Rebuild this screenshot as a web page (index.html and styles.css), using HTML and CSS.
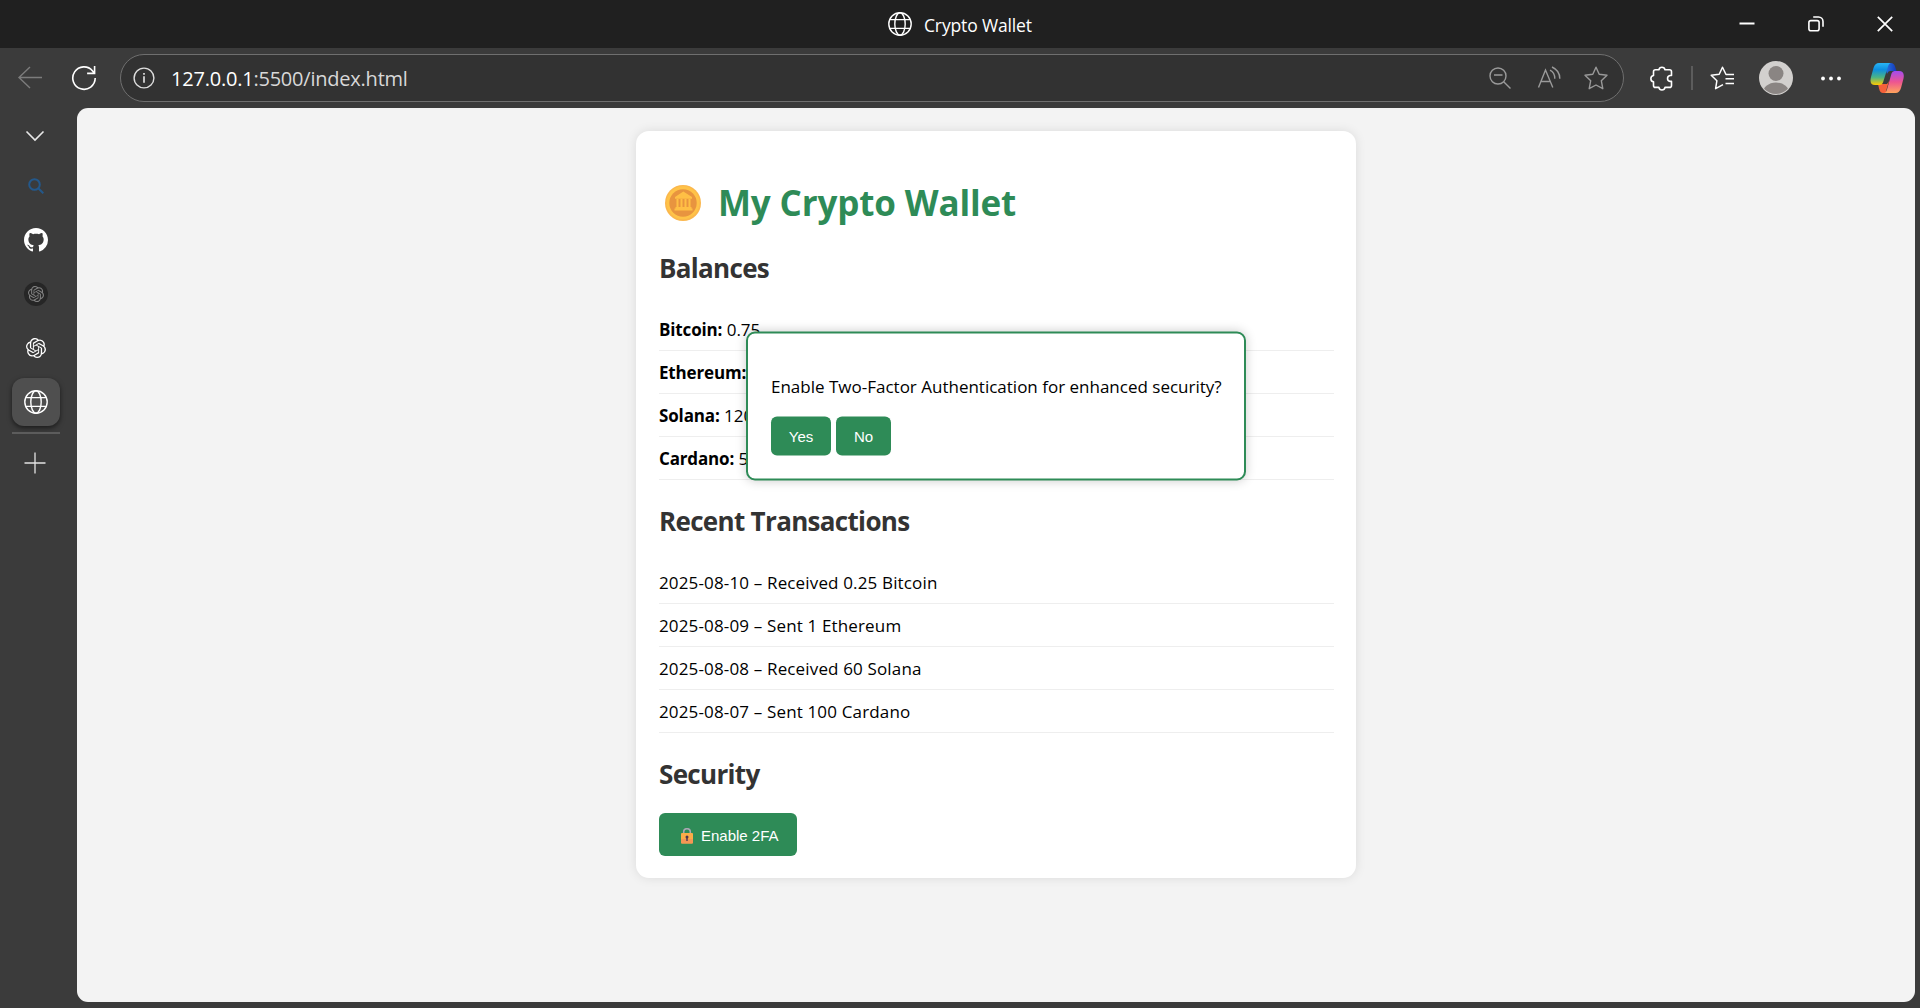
FILE: index.html
```html
<!DOCTYPE html>
<html lang="en">
<head>
<meta charset="utf-8">
<title>Crypto Wallet</title>
<link rel="stylesheet" href="styles.css">
</head>
<body>
<svg class="defs" aria-hidden="true">
  <symbol id="globe" viewBox="0 0 24 24"><g fill="none" stroke="currentColor" stroke-width="1.4"><circle cx="12" cy="12" r="11.2"/><ellipse cx="12" cy="12" rx="5.2" ry="11.2"/><path d="M1.8 7.6h20.4M1.8 16.4h20.4"/></g></symbol>
  <symbol id="knot" viewBox="0 0 24 24"><path fill="currentColor" d="M22.2819 9.8211a5.9847 5.9847 0 0 0-.5157-4.9108 6.0462 6.0462 0 0 0-6.5098-2.9A6.0651 6.0651 0 0 0 4.9807 4.1818a5.9847 5.9847 0 0 0-3.9977 2.9 6.0462 6.0462 0 0 0 .7427 7.0966 5.98 5.98 0 0 0 .511 4.9107 6.051 6.051 0 0 0 6.5146 2.9001A5.9847 5.9847 0 0 0 13.2599 24a6.0557 6.0557 0 0 0 5.7718-4.2058 5.9894 5.9894 0 0 0 3.9977-2.9001 6.0557 6.0557 0 0 0-.7475-7.0729zm-9.022 12.6081a4.4755 4.4755 0 0 1-2.8764-1.0408l.1419-.0804 4.7783-2.7582a.7948.7948 0 0 0 .3927-.6813v-6.7369l2.02 1.1686a.071.071 0 0 1 .038.052v5.5826a4.504 4.504 0 0 1-4.4945 4.4944zm-9.6607-4.1254a4.4708 4.4708 0 0 1-.5346-3.0137l.142.0852 4.783 2.7582a.7712.7712 0 0 0 .7806 0l5.8428-3.3685v2.3324a.0804.0804 0 0 1-.0332.0615L9.74 19.9502a4.4992 4.4992 0 0 1-6.1408-1.6464zM2.3408 7.8956a4.485 4.485 0 0 1 2.3655-1.9728V11.6a.7664.7664 0 0 0 .3879.6765l5.8144 3.3543-2.0201 1.1685a.0757.0757 0 0 1-.071 0l-4.8303-2.7865A4.504 4.504 0 0 1 2.3408 7.872zm16.5963 3.8558L13.1038 8.364 15.1192 7.2a.0757.0757 0 0 1 .071 0l4.8303 2.7913a4.4944 4.4944 0 0 1-.6765 8.1042v-5.6772a.79.79 0 0 0-.407-.667zm2.0107-3.0231l-.142-.0852-4.7735-2.7818a.7759.7759 0 0 0-.7854 0L9.409 9.2297V6.8974a.0662.0662 0 0 1 .0284-.0615l4.8303-2.7866a4.4992 4.4992 0 0 1 6.6802 4.66zM8.3065 12.863l-2.02-1.1638a.0804.0804 0 0 1-.038-.0567V6.0742a4.4992 4.4992 0 0 1 7.3757-3.4537l-.142.0805L8.704 5.459a.7948.7948 0 0 0-.3927.6813zm1.0976-2.3654l2.602-1.4998 2.6069 1.4998v2.9994l-2.5974 1.4997-2.6067-1.4997Z"/></symbol>
</svg>

<header class="titlebar">
  <div class="window-title"><svg width="24" height="24"><use href="#globe"/></svg><span>Crypto Wallet</span></div>
  <div class="window-controls">
    <svg width="16" height="16" viewBox="0 0 16 16"><path d="M.5 7.5h15" stroke="#fff" stroke-width="2"/></svg>
    <svg width="16" height="16" viewBox="0 0 16 16" fill="none" stroke="#fff" stroke-width="1.6"><rect x=".9" y="4.6" width="10.2" height="10.2" rx="2"/><path d="M5.2 1h5.3a4.500 4.500 0 0 1 4.500 4.500v5.300"/></svg>
    <svg width="16" height="16" viewBox="0 0 16 16"><path d="M.8.8l14.400 14.400M15.200.8L.8 15.200" stroke="#fff" stroke-width="1.700"/></svg>
  </div>
</header>

<nav class="toolbar">
  <div class="nav-buttons">
    <svg width="26" height="24" viewBox="0 0 26 24" fill="none" stroke="#7c7c7c" stroke-width="1.400"><path d="M25 11.500H2M13 1L2 11.500 13 22"/></svg>
    <svg width="26" height="26" viewBox="0 0 26 26" fill="none" stroke="#fff" stroke-width="1.600"><path d="M24.200 13A11.200 11.200 0 1 1 21.600 5.900L23.500 8.200M23.600 1v7.400h-7.500"/></svg>
  </div>
  <div class="address">
    <svg class="info" width="22" height="22" viewBox="0 0 22 22"><circle cx="11" cy="11" r="9.900" fill="none" stroke="#ddd" stroke-width="1.400"/><path d="M11 9.300v6.500M11 6v1.800" stroke="#ddd" stroke-width="1.700"/></svg>
    <span class="url"><b>127.0.0.1</b>:5500/index.html</span>
    <div class="address-tools">
      <svg width="22" height="22" viewBox="0 0 22 22" fill="none" stroke="#9a9a9a" stroke-width="1.400"><circle cx="9" cy="9" r="8"/><path d="M5 8h8.500M14.700 14.700L21.500 21.500"/></svg>
      <svg width="24" height="24" viewBox="0 0 24 24" fill="none" stroke="#9a9a9a" stroke-width="1.400"><path d="M1.500 21.500L8.500 4l7.300 17.500M4.200 15.500h8.800M13 4.200q4.800 2.300 4.800 8.500M15 1q7.800 3.500 7.800 11.700"/></svg>
      <svg width="24" height="24" viewBox="0 0 24 24" fill="none" stroke="#9a9a9a" stroke-width="1.400" stroke-linejoin="round"><path d="M12 1.200l3.200 7 7.800 1-5.700 5.500 1.500 8L12 19l-6.800 3.700 1.500-8L1 9.200l7.800-1z"/></svg>
    </div>
  </div>
  <div class="browser-tools">
    <svg width="24" height="25" viewBox="0 0 24 25" fill="none" stroke="#fff" stroke-width="1.600" stroke-linejoin="round"><path d="M6.500 3.800h3.400a3.100 3.100 0 0 1 6.100 0H20.500q2 0 2 2v3.700h-1.500a3 3 0 0 0 0 5.900h1.500v4q0 2-2 2H16a3.100 3.100 0 0 1-6.100 0H6.500q-2 0-2-2v-3.600a3.200 3.200 0 0 1 0-6.300V5.800q0-2 2-2z"/></svg>
    <i class="tool-divider"></i>
    <svg width="25" height="24" viewBox="0 0 25 24" fill="none" stroke="#fff" stroke-width="1.500" stroke-linejoin="round"><path d="M24 8.500h-8L12.500 1.200 9.200 8.200 1.200 9.200l5.700 5.500-1.300 8L13 18.700M15.500 12.800H24M15.500 17.600H24"/></svg>
    <svg width="34" height="34" viewBox="0 0 34 34"><clipPath id="face"><circle cx="17" cy="17" r="16"/></clipPath><circle cx="17" cy="17" r="17" fill="#d2d0ce"/><g clip-path="url(#face)" fill="#8a8583"><circle cx="17" cy="12.500" r="7.500"/><ellipse cx="17" cy="33" rx="13.500" ry="11.500"/></g></svg>
    <svg width="20" height="6" viewBox="0 0 20 6" fill="#fff"><circle cx="2" cy="3.500" r="1.900"/><circle cx="10" cy="3.500" r="1.900"/><circle cx="18" cy="3.500" r="1.900"/></svg>
    <svg width="34" height="32" viewBox="0 0 34 32">
      <defs>
        <linearGradient id="ca" x1="0" y1="0" x2="0" y2="1"><stop offset="0" stop-color="#29b5f5"/><stop offset=".3" stop-color="#0d8fe0"/><stop offset=".65" stop-color="#4bb486"/><stop offset="1" stop-color="#ffca00"/></linearGradient>
        <linearGradient id="cb" x1="0" y1="0" x2="0" y2="1"><stop offset="0" stop-color="#a34bf0"/><stop offset=".5" stop-color="#ee5590"/><stop offset="1" stop-color="#ffa45c"/></linearGradient>
        <linearGradient id="cc"><stop offset="0" stop-color="#2a7fe8"/><stop offset="1" stop-color="#1438b8"/></linearGradient>
      </defs>
      <path fill="url(#cc)" d="M14 1h7q3 0 4 3.500L26.500 9H20q-2 0-3 3z"/>
      <path fill="#f4603a" d="M8 22h9l2-3-2.500 8.500Q15.500 31 18 31h-5q-3 0-3.800-4z"/>
      <path fill="url(#ca)" d="M9 1h12q-2 0-3 3.500l-5 16Q12.200 23 9.500 23H5q-6 0-4-8l2.500-9Q5 1 9 1z"/>
      <path fill="url(#cb)" d="M24.500 9H29q6 0 4.500 7.500L31 26q-1.500 5-5.500 5H14q2 0 3-3.500l4.500-16Q22.200 9 24.500 9z"/>
    </svg>
  </div>
</nav>

<div class="workspace">
  <aside class="tabs">
    <div class="tab tab-toggle"><svg width="20" height="12" viewBox="0 0 20 12"><path d="M1.500 1.500L10 10l8.500-8.500" fill="none" stroke="#e8e8e8" stroke-width="1.600"/></svg></div>
    <div class="tab"><svg width="16" height="16" viewBox="0 0 16 16" fill="none" stroke="#24588a" stroke-width="2"><circle cx="6.500" cy="6.500" r="5.300"/><path d="M10 10l5.300 5.300"/></svg></div>
    <div class="tab"><svg width="24" height="24" viewBox="0 0 16 16"><path fill="#fff" d="M8 0C3.58 0 0 3.58 0 8c0 3.54 2.29 6.53 5.47 7.59.4.07.55-.17.55-.38 0-.19-.01-.82-.01-1.49-2.01.37-2.53-.49-2.69-.94-.09-.23-.48-.94-.82-1.13-.28-.15-.68-.52-.01-.53.63-.01 1.08.58 1.23.82.72 1.21 1.87.87 2.33.66.07-.52.28-.87.51-1.07-1.78-.2-3.64-.89-3.64-3.95 0-.87.31-1.59.82-2.15-.08-.2-.36-1.02.08-2.12 0 0 .67-.21 2.2.82.64-.18 1.32-.27 2-.27s1.36.09 2 .27c1.53-1.04 2.2-.82 2.2-.82.44 1.1.16 1.92.08 2.12.51.56.82 1.27.82 2.15 0 3.07-1.87 3.75-3.65 3.95.29.25.54.73.54 1.48 0 1.07-.01 1.93-.01 2.2 0 .21.15.46.55.38A8.01 8.01 0 0 0 16 8c0-4.42-3.58-8-8-8z"/></svg></div>
    <div class="tab"><span class="dim-badge"><svg width="16" height="16"><use href="#knot"/></svg></span></div>
    <div class="tab"><svg width="20" height="20"><use href="#knot"/></svg></div>
    <div class="tab tab-active"><svg width="24" height="24"><use href="#globe"/></svg></div>
    <hr class="tab-divider">
    <div class="tab tab-new"><svg width="22" height="22" viewBox="0 0 22 22"><path d="M.5 11h21M11 .5v21" stroke="#e4e4e4" stroke-width="1.300"/></svg></div>
  </aside>

  <main class="page">
    <section class="wallet">
      <h1><svg width="36" height="36" viewBox="0 0 36 36"><circle cx="18" cy="18" r="18" fill="#fbb74d"/><circle cx="18" cy="17.700" r="16.500" fill="#ffc348"/><circle cx="18" cy="18" r="13.700" fill="#e8943f"/><path fill="#ffbf45" d="M10 12l8.300-5.500L27 12v1.800H10zM11.500 14h2v8.200h-2zM15.500 14h2v8.200h-2zM19.500 14h2v8.200h-2zM23.500 14h2v8.200h-2zM10.500 22h16v1.500h1v2H9.500v-2h1z"/></svg><span>My Crypto Wallet</span></h1>
      <h2>Balances</h2>
      <ul>
        <li><strong>Bitcoin:</strong> 0.75</li>
        <li><strong>Ethereum:</strong> 2.5</li>
        <li><strong>Solana:</strong> 120</li>
        <li><strong>Cardano:</strong> 500</li>
      </ul>
      <h2>Recent Transactions</h2>
      <ul class="transactions">
        <li>2025-08-10 – Received 0.25 Bitcoin</li>
        <li>2025-08-09 – Sent 1 Ethereum</li>
        <li>2025-08-08 – Received 60 Solana</li>
        <li>2025-08-07 – Sent 100 Cardano</li>
      </ul>
      <h2 class="h-security">Security</h2>
      <button class="enable"><svg width="12" height="16" viewBox="0 0 12 16"><path d="M2.700 6V4a3.300 3.300 0 0 1 6.600 0v2" fill="none" stroke="#aaa6b4" stroke-width="1.600"/><rect y="5" width="12" height="10.500" rx="1" fill="#fbac48"/><rect y="11" width="12" height="4.500" rx="1" fill="#f59655"/><circle cx="6" cy="9" r="1.500" fill="#4b3550"/><path d="M5.300 9h1.400v4H5.300z" fill="#4b3550"/></svg><span>Enable 2FA</span></button>
    </section>
    <div class="modal">
      <p>Enable Two-Factor Authentication for enhanced security?</p>
      <div class="modal-actions"><button class="yes">Yes</button><button class="no">No</button></div>
    </div>
  </main>
</div>
</body>
</html>
```
FILE: styles.css
```css
* { box-sizing: border-box; }
body {
  margin: 0;
  width: 1920px;
  height: 1008px;
  overflow: hidden;
  display: flex;
  flex-direction: column;
  background: #3b3b3b;
  color: #000;
  font-family: "Open Sans", "Noto Sans", sans-serif;
}
svg { display: block; flex: none; }
.defs { position: absolute; width: 0; height: 0; }

/* Title bar */
.titlebar {
  height: 48px;
  flex: none;
  display: flex;
  justify-content: space-between;
  background: #202020;
  color: #fff;
}
.window-title {
  display: flex;
  align-items: center;
  gap: 12px;
  padding-left: 888px;
  font-size: 17.5px;
  letter-spacing: -0.15px;
}
.window-title span { padding-top: 1px; }
.window-controls {
  display: grid;
  grid-template-columns: repeat(3, 69px);
  place-items: center;
  padding-right: 1px;
  margin-top: -1px;
}

/* Toolbar */
.toolbar {
  height: 60px;
  flex: none;
  display: flex;
  align-items: center;
}
.nav-buttons {
  width: 120px;
  display: flex;
  align-items: center;
  gap: 28px;
  padding-left: 17px;
}
.address {
  width: 1504px;
  height: 48px;
  display: flex;
  align-items: center;
  background: #323232;
  border: 1px solid #6f6f6f;
  border-radius: 24px;
}
.info { margin-left: 12px; }
.url {
  margin-left: 16px;
  font-size: 20px;
  letter-spacing: -0.22px;
  color: #d8d8d8;
}
.url b { font-weight: 400; color: #fff; }
.address-tools {
  margin-left: auto;
  margin-right: 4px;
  display: grid;
  grid-template-columns: 50px 48px 46px;
  place-items: center;
}
.browser-tools {
  margin-left: 8px;
  display: grid;
  grid-template-columns: 58px 4px 56px 52px 57px 56px;
  place-items: center;
}
.tool-divider { width: 2px; height: 24px; background: #5c5c5c; }

/* Vertical tabs */
.workspace { flex: 1; display: flex; min-height: 0; }
.tabs {
  width: 77px;
  flex: none;
  display: flex;
  flex-direction: column;
  padding: 4px 0 0 12px;
  gap: 6px;
  color: #fff;
}
.tab {
  width: 48px;
  height: 48px;
  flex: none;
  display: grid;
  place-items: center;
}
.tab-toggle { padding-right: 2px; margin-bottom: -4px; }
.tab-active {
  background: #4f4f4f;
  border-radius: 12px;
  box-shadow: 0 2px 5px rgba(0, 0, 0, .55);
}
.dim-badge {
  width: 24px;
  height: 24px;
  display: grid;
  place-items: center;
  border-radius: 50%;
  background: #262626;
  color: #828282;
}
.tab-divider { width: 48px; height: 2px; margin: 0; border: 0; background: #5c5c5c; flex: none; }
.tab-new { margin-top: -1px; padding-right: 2px; }

/* Page */
.page {
  position: relative;
  width: 1838px;
  height: 894px;
  padding: 23px 0 0 559px;
  background: #f3f3f3;
  border-radius: 11px;
}
.wallet {
  width: 720px;
  height: 747px;
  padding: 22px 22px 0 23px;
  background: #fff;
  border-radius: 13px;
  box-shadow: 0 0 11px rgba(0, 0, 0, .1);
}
h1 {
  margin: 26px 0 23px;
  height: 48px;
  display: flex;
  align-items: center;
  gap: 17px;
  padding-left: 6px;
  font-size: 35px;
  line-height: 48px;
  letter-spacing: -0.15px;
  color: #2e8b57;
}
h2 {
  margin: 23px 0 22px;
  font-size: 26px;
  line-height: 36px;
  letter-spacing: -0.68px;
  color: #333;
}
.h-security { margin-bottom: 21px; }
ul { margin: 0; padding: 0; list-style: none; }
li {
  height: 43px;
  padding: 10px 0 8px;
  border-bottom: 1px solid #eee;
  font-size: 17px;
  line-height: 24px;
}
li strong { letter-spacing: -0.15px; }
.transactions li { letter-spacing: 0.15px; }
button {
  border: 0;
  border-radius: 6px;
  background: #2e8b57;
  color: #fff;
  font-family: "Liberation Sans", Arial, sans-serif;
  font-size: 15px;
}
.enable {
  width: 138px;
  height: 43px;
  display: flex;
  align-items: center;
  gap: 8px;
  padding: 2px 0 0 22px;
}

/* Two-factor dialog */
.modal {
  position: absolute;
  left: 669px;
  top: 223px;
  width: 500px;
  height: 149px;
  padding: 41px 0 0 23px;
  background: #fff;
  border: 2px solid #2e8b57;
  border-radius: 9px;
  box-shadow: 0 0 11px rgba(0, 0, 0, .2);
  transform: translateY(.5px);
}
.modal p { margin: 0 0 18px; font-size: 17px; line-height: 24px; white-space: nowrap; }
.modal-actions { display: flex; gap: 5px; }
.modal button { height: 39px; padding: 0; }
.yes { width: 60px; }
.no { width: 55px; }
```
